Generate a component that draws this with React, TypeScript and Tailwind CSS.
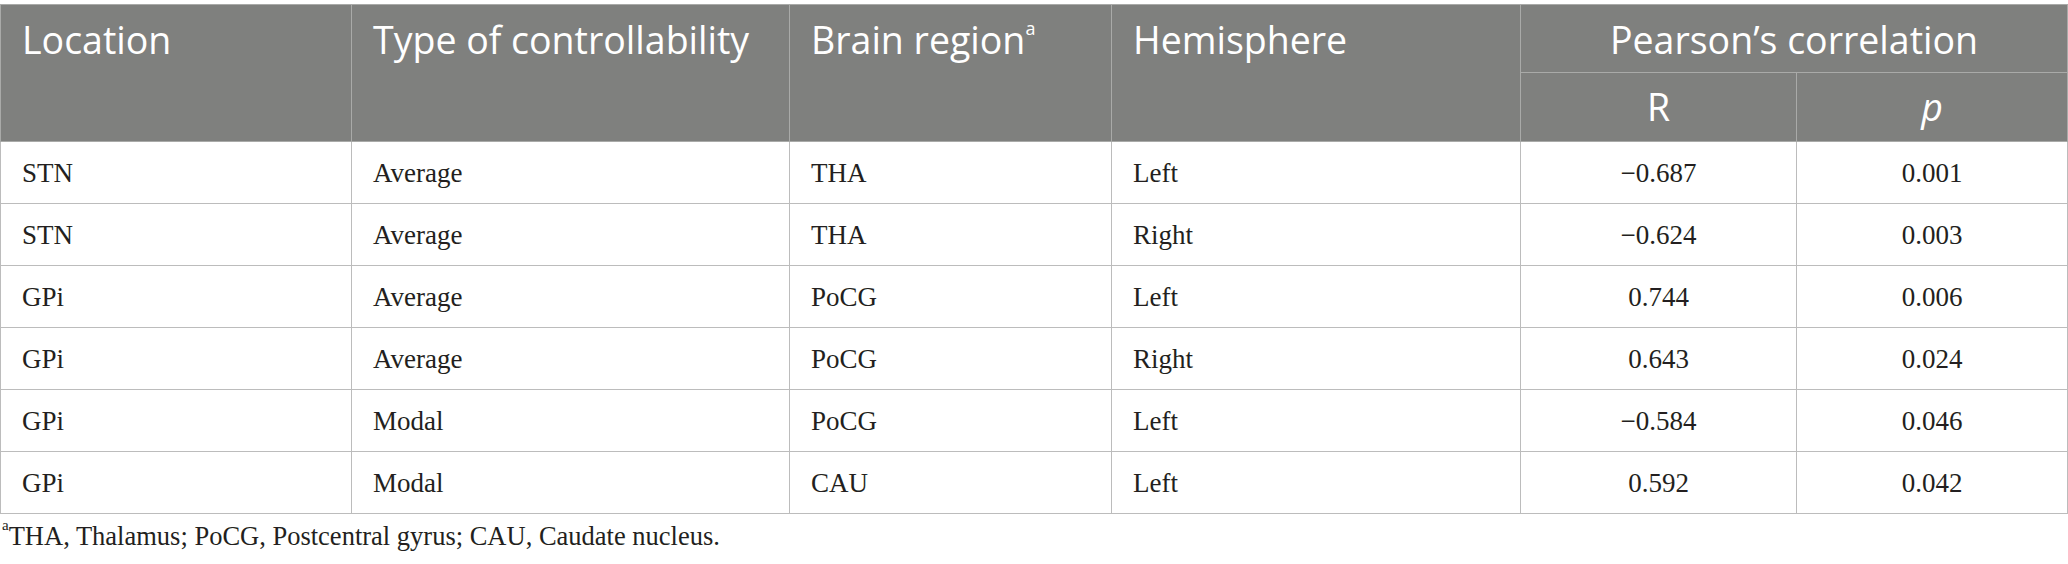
const rows = [
  ['STN', 'Average', 'THA', 'Left', '\u22120.687', '0.001'],
  ['STN', 'Average', 'THA', 'Right', '\u22120.624', '0.003'],
  ['GPi', 'Average', 'PoCG', 'Left', '0.744', '0.006'],
  ['GPi', 'Average', 'PoCG', 'Right', '0.643', '0.024'],
  ['GPi', 'Modal', 'PoCG', 'Left', '\u22120.584', '0.046'],
  ['GPi', 'Modal', 'CAU', 'Left', '0.592', '0.042'],
]

const headCell = 'border border-[#a9aaa8] px-[21px] align-top pt-[11px] text-left font-normal'
const bodyCell = 'border border-[#bcbcbc] px-[21px] align-middle'

export default function App() {
  return (
    <div className="min-h-screen bg-white pt-[4px] text-[#231f20]">
      <table className="w-[2067px] table-fixed border-collapse">
        <colgroup>
          <col className="w-[351px]" />
          <col className="w-[438px]" />
          <col className="w-[322px]" />
          <col className="w-[409px]" />
          <col className="w-[276px]" />
          <col className="w-[271px]" />
        </colgroup>
        <thead className="bg-[#7f807e] text-white font-['Open_Sans',sans-serif] text-[37.5px] font-light leading-[48px]">
          <tr className="h-[68px]">
            <th rowSpan={2} className={headCell}>Location</th>
            <th rowSpan={2} className={headCell}>Type of controllability</th>
            <th rowSpan={2} className={headCell}>
              Brain region<sup className="text-[18px] align-[10px]">a</sup>
            </th>
            <th rowSpan={2} className={headCell}>Hemisphere</th>
            <th colSpan={2} className="border border-[#a9aaa8] pt-[3px] text-center align-middle font-normal">
              Pearson’s correlation
            </th>
          </tr>
          <tr className="h-[69px]">
            <th className="border border-[#a9aaa8] text-center align-middle font-normal">R</th>
            <th className="border border-[#a9aaa8] text-center align-middle font-normal italic">p</th>
          </tr>
        </thead>
        <tbody className="font-['Liberation_Serif',serif] text-[27px] leading-[32px]">
          {rows.map((r, i) => (
            <tr key={i} className="h-[62px]">
              <td className={bodyCell}>{r[0]}</td>
              <td className={bodyCell}>{r[1]}</td>
              <td className={bodyCell}>{r[2]}</td>
              <td className={bodyCell}>{r[3]}</td>
              <td className={bodyCell + ' text-center'}>{r[4]}</td>
              <td className={bodyCell + ' text-center'}>{r[5]}</td>
            </tr>
          ))}
        </tbody>
      </table>
      <p className="mt-[6px] pl-[2px] font-['Liberation_Serif',serif] text-[26.5px] leading-[32px]">
        <sup className="text-[15px] align-[8px]">a</sup>THA, Thalamus; PoCG, Postcentral gyrus; CAU, Caudate nucleus.
      </p>
    </div>
  )
}
